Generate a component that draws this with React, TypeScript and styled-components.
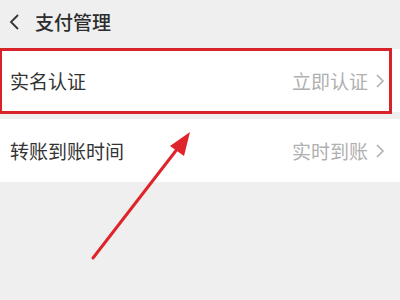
import React from "react";
import styled, { createGlobalStyle } from "styled-components";

const GlobalStyle = createGlobalStyle`
  html, body {
    margin: 0;
    padding: 0;
    background: #efefef;
    font-family: "Noto Sans CJK SC", "Noto Sans", sans-serif;
  }
`;

type Item = {
  label: string;
  value: string;
  marked?: boolean;
};

const items: Item[] = [
  { label: "实名认证", value: "立即认证", marked: true },
  { label: "转账到账时间", value: "实时到账" },
];

export default function App() {
  return (
    <Page>
      <GlobalStyle />
      <Header>
        <BackIcon viewBox="0 0 12 18">
          <path d="M10 2 L3 9 L10 16" />
        </BackIcon>
        <Title>支付管理</Title>
      </Header>
      <List>
        {items.map((item) => (
          <Row key={item.label}>
            <Label>{item.label}</Label>
            <Value>
              {item.value}
              <Chevron viewBox="0 0 10 16">
                <path d="M2 2 L8 8 L2 14" />
              </Chevron>
            </Value>
            {item.marked && <Highlight />}
          </Row>
        ))}
      </List>
      <Arrow viewBox="0 0 400 300">
        <line x1="93" y1="258" x2="178" y2="148" />
        <polygon points="190,132 170,146 184,156" />
      </Arrow>
    </Page>
  );
}

const Page = styled.div`
  position: relative;
  width: 400px;
  height: 300px;
  overflow: hidden;
  background: #efefef;
`;

const Header = styled.header`
  height: 49px;
  display: flex;
  align-items: center;
  padding-left: 8px;
  gap: 15px;
  box-sizing: border-box;
  padding-bottom: 6px;
`;

const BackIcon = styled.svg`
  width: 12px;
  height: 18px;
  fill: none;
  stroke: #333;
  stroke-width: 1.8;
`;

const Title = styled.h1`
  margin: 0;
  font-size: 19px;
  font-weight: 500;
  color: #2c2c2c;
`;

const List = styled.div`
  display: flex;
  flex-direction: column;
  gap: 7px;
`;

const Row = styled.div<{ $tall?: boolean }>`
  position: relative;
  height: 63px;
  background: #fff;
  display: flex;
  align-items: center;
  justify-content: space-between;
  padding: 0 15px 0 10px;
`;

const Label = styled.span`
  font-size: 19px;
  color: #333;
`;

const Value = styled.span`
  display: flex;
  align-items: center;
  gap: 7px;
  font-size: 19px;
  color: #b0b0b0;
`;

const Chevron = styled.svg`
  width: 10px;
  height: 16px;
  fill: none;
  stroke: #b0b0b0;
  stroke-width: 1.6;
`;

const Highlight = styled.div`
  position: absolute;
  left: -1px;
  top: -1px;
  right: 8px;
  bottom: -2px;
  border: 3px solid #d8232a;
  box-sizing: border-box;
`;

const Arrow = styled.svg`
  position: absolute;
  left: 0;
  top: 0;
  width: 400px;
  height: 300px;
  pointer-events: none;
  line {
    stroke: #e0242b;
    stroke-width: 3;
    stroke-linecap: round;
  }
  polygon {
    fill: #e0242b;
  }
`;
